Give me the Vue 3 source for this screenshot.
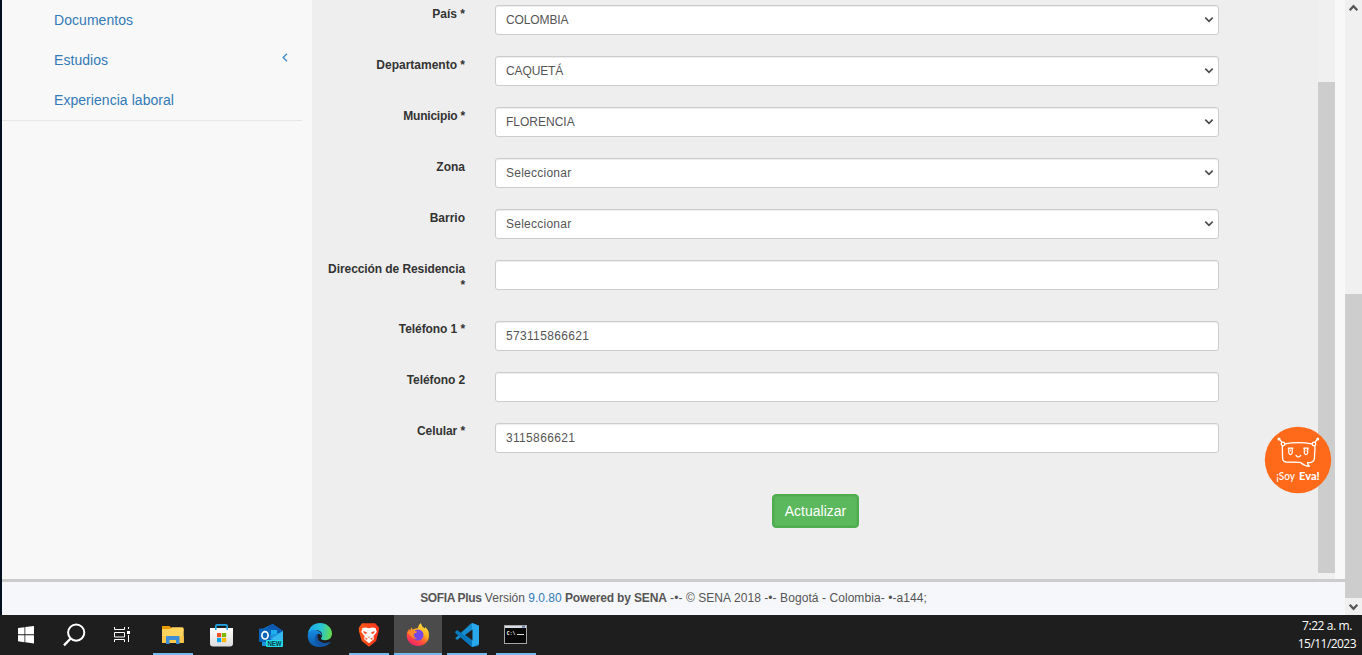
<script setup>
const fields = [
  { label: 'País *', value: 'COLOMBIA', select: true, kind: 'caps' },
  { label: 'Departamento *', value: 'CAQUETÁ', select: true, kind: 'caps' },
  { label: 'Municipio *', value: 'FLORENCIA', select: true, kind: 'plain', narrow: true },
  { label: 'Zona', value: 'Seleccionar', select: true, kind: 'wide' },
  { label: 'Barrio', value: 'Seleccionar', select: true, kind: 'wide' },
  { label: 'Dirección de Residencia *', value: '', tall: true },
  { label: 'Teléfono 1 *', value: '573115866621', kind: 'digits', low: true },
  { label: 'Teléfono 2', value: '', low: true },
  { label: 'Celular *', value: '3115866621', kind: 'digits', low: true }
]
</script>

<template>
  <div class="screen">
    <div class="browser">
      <div class="page">
        <div class="body">
          <nav class="sidebar">
            <a>Documentos</a>
            <a>Estudios
              <svg class="angle" width="6" height="9" viewBox="0 0 6 9"><path d="M5 .7 1.2 4.5 5 8.3" fill="none" stroke="#428bca" stroke-width="1.4" /></svg>
            </a>
            <a>Experiencia laboral</a>
          </nav>
          <main class="content">
            <div v-for="f in fields" :key="f.label" class="row" :class="{ tall: f.tall, low: f.low, narrow: f.narrow }">
              <label>{{ f.label }}</label>
              <div class="control">
                <span :class="f.kind">{{ f.value }}</span>
                <svg v-if="f.select" width="10" height="8" viewBox="0 0 10 8"><path d="M1.3 1.7 5 5.3 8.7 1.7" fill="none" stroke="#4c4c4c" stroke-width="1.7" /></svg>
              </div>
            </div>
            <div class="actions"><button>Actualizar</button></div>
          </main>
          <div class="inner-scroll"><i></i></div>
          <div class="gutter"></div>
        </div>
        <footer><p><b class="brand">SOFIA Plus</b> Versión <a>9.0.80</a> <b class="power">Powered by SENA</b> <span class="legal">-•- © SENA 2018 -•- Bogotá - Colombia- •-a144;</span></p></footer>
      </div>
      <div class="outer-scroll">
        <svg class="up" width="17" height="17" viewBox="0 0 17 17"><path d="M4.7 10.2 8.5 6.2 12.3 10.2" fill="none" stroke="#555" stroke-width="2.3" /></svg>
        <i></i>
        <svg class="down" width="17" height="17" viewBox="0 0 17 17"><path d="M4.7 6.8 8.5 10.8 12.3 6.8" fill="none" stroke="#555" stroke-width="2.3" /></svg>
      </div>
    </div>

    <div class="eva">
      <svg width="68" height="68" viewBox="0 0 68 68">
        <circle cx="34" cy="34" r="33.2" fill="#ff6a1a" />
        <g fill="none" stroke="#fff" stroke-width="1.3" stroke-linecap="round" stroke-linejoin="round">
          <path d="M21 17.8Q34 15.4 48 17.8Q51.3 18.4 51 22L50.4 32Q50.2 36 46.5 36.5L43.5 36.7Q43.7 38.7 45.5 40.2Q40.5 40 36.5 36.4L22 36Q18.8 35.8 18.6 32L18.3 22Q18.2 18.3 21 17.8Z" />
          <circle cx="19" cy="18" r="1.8" fill="#ff6a1a" /><circle cx="50" cy="18" r="1.8" fill="#ff6a1a" />
          <path d="M17.7 16 15.5 13.3M51.2 16 53.3 13.3" />
          <path d="M24.3 22.2H28.8M24.8 22.5V27Q26.5 30.3 28.2 27V22.5M39.8 22.2H44.3M40.3 22.5V27Q42 30.3 43.7 27V22.5M32 29.3Q34.3 32.7 36.7 29.3" stroke-width="1.2" />
          <path d="M26.5 24V25M42 24V25" stroke-width=".8" />
        </g>
        <circle cx="15" cy="13" r="1.5" fill="#fff" /><circle cx="53.7" cy="13" r="1.5" fill="#fff" />
        <text x="12.3" y="53.5" textLength="18.7" lengthAdjust="spacingAndGlyphs">¡Soy</text>
        <text x="35" y="53.5" class="strong" textLength="20.7" lengthAdjust="spacingAndGlyphs">Eva!</text>
      </svg>
    </div>

    <div class="taskbar">
      <span class="slot w52">
        <svg width="52" height="40" viewBox="0 0 52 40"><path d="M18 13.1 24.5 12.2V19.3H18ZM25.3 12.1 34 11V19.3H25.3ZM18 20.2H24.5V27.2L18 26.3ZM25.3 20.2H34V28.4L25.3 27.3Z" fill="#fff" /></svg>
      </span>
      <span class="slot w48">
        <svg width="48" height="40" viewBox="0 0 48 40"><circle cx="24.2" cy="17.6" r="8.1" fill="none" stroke="#fff" stroke-width="2" /><path d="M18.4 23.7 12 30.4" stroke="#fff" stroke-width="2.3" /></svg>
      </span>
      <span class="slot w48">
        <svg width="48" height="40" viewBox="0 0 48 40"><path d="M14.5 12V14.5H24.5V12M14.5 27V24.5H24.5V27M14.5 17.5H24.5V22H14.5ZM28.5 12V14M28.5 20V27" fill="none" stroke="#fff" stroke-width="1" /><path d="M27 16H30V19H27Z" fill="#fff" /></svg>
      </span>
      <span class="slot w49 open">
        <svg width="49" height="40" viewBox="0 0 49 40"><path d="M14 11H21.5L23.5 13H34Q35.5 13 35.5 14.5V16H14Z" fill="#e89a08" /><path d="M14 14H22L24 12.2H34.2Q35.7 12.2 35.7 13.7V27.8H14Z" fill="#ffd35d" /><path d="M14 21H35.7V28H14Z" fill="#fcc64a" /><path d="M18 29V22Q18 21 19 21H30.5Q31.5 21 31.5 22V29H28V25H21.5V29Z" fill="#3d8ed4" /></svg>
      </span>
      <span class="slot w49">
        <svg width="49" height="40" viewBox="0 0 49 40"><defs><linearGradient id="bag" x2="0" y2="1"><stop stop-color="#fff" /><stop offset="1" stop-color="#dcdcdc" /></linearGradient></defs><path d="M18.8 15V11.3Q18.8 9.8 20.3 9.8H28.7Q30.2 9.8 30.2 11.3V15" fill="none" stroke="#21a6e8" stroke-width="1.7" /><path d="M13 13H36V28.5Q36 31.5 33 31.5H16Q13 31.5 13 28.5Z" fill="url(#bag)" /><path d="M18.8 15V12.5M30.2 15V12.5" stroke="#21a6e8" stroke-width="1.5" /><path d="M20 18H24.2V22.2H20Z" fill="#f25022" /><path d="M25 18H29.2V22.2H25Z" fill="#7fba00" /><path d="M20 23H24.2V27.2H20Z" fill="#00a4ef" /><path d="M25 23H29.2V27.2H25Z" fill="#ffb900" /></svg>
      </span>
      <span class="slot w49">
        <svg width="49" height="40" viewBox="0 0 49 40"><path d="M16 14 26.5 9 37 16V31H16Z" fill="#1477c9" /><path d="M19 14 27 9 37 16 28 22Z" fill="#0d58b0" /><path d="M25 15H31V21L28 23 25 22Z" fill="#1db0ee" /><path d="M17 22 37 17V31H18Q16 31 16 29Z" fill="#1d94dc" /><path d="M37 16V29L25 24Z" fill="#35b9ef" /><path d="M13 14.5Q13 13.5 14 13.5H24.5V27H14Q13 27 13 26Z" fill="#0864b9" /><ellipse cx="19" cy="20.3" rx="3.1" ry="3.7" fill="none" stroke="#fff" stroke-width="1.7" /><rect x="20" y="25" width="17" height="7" rx="1" fill="#23dce5" /><text x="21.4" y="31" class="new" textLength="14.2" lengthAdjust="spacingAndGlyphs">NEW</text></svg>
      </span>
      <span class="slot w49">
        <svg width="49" height="40" viewBox="0 0 49 40"><defs><linearGradient id="ea" x1="0" y1=".3" x2="1" y2=".4"><stop stop-color="#1aa7ed" /><stop offset=".55" stop-color="#28c5d6" /><stop offset="1" stop-color="#64db4c" /></linearGradient><linearGradient id="eb" x2="0" y2="1"><stop stop-color="#168de4" /><stop offset="1" stop-color="#0c58a6" /></linearGradient></defs><path d="M12.8 18.6C14 12 19 8 25 8C32 8 37 13 37 18.5C37 22.8 34 25.2 30.2 25.2C27.8 25.2 25.7 24.4 26 23.2C27 21.8 27.3 20.9 27.1 19.2C26.6 14.7 18 12.6 12.8 18.6Z" fill="url(#ea)" /><path d="M12.8 19.5C14 14.4 20 13.4 24 16.3C25.8 17.6 26.9 18.7 26.8 21C24 17 20 20 20.2 24C20.8 28.6 25 32 29 31.2C19 34.5 12 28 12.8 19.5Z" fill="url(#eb)" /><path d="M23.3 18.2C19.5 20 18.7 25 21.5 28.4C25 33 32.3 32.5 36 26.5C32 29 23.8 28.3 22.8 23.2C22.4 21 22.5 20 23.3 18.2Z" fill="#1356a4" /></svg>
      </span>
      <span class="slot w50 open">
        <svg width="50" height="40" viewBox="-.5 0 50 40"><defs><linearGradient id="br"><stop stop-color="#ff5a19" /><stop offset="1" stop-color="#ff331b" /></linearGradient></defs><path d="M17.5 8.2H30.5L32.5 10.3 34.6 12.7 34.2 16 31.6 26 24.5 31.8 17.4 26 14.3 16 14.4 12.7Z" fill="url(#br)" /><path d="M18 13 21.3 12.4 24.3 13.3 27.6 12.4 31 13 32.3 17 29 21 29.3 24.3 24.5 28.3 19.7 24.3 20 21 16.8 17Z" fill="#fff" /><path d="M18.7 16 22.3 17.2 21.8 18.9 19.4 18.2ZM30.3 16 26.7 17.2 27.2 18.9 29.6 18.2ZM22.7 21.2 24.5 22 26.3 21.2 24.5 23ZM20.8 22.5 23.3 23.8 21.3 25ZM28.2 22.5 25.7 23.8 27.7 25Z" fill="#f4501f" /></svg>
      </span>
      <span class="slot w48 active">
        <svg width="48" height="40" viewBox="0 0 48 40"><defs><linearGradient id="fx" x1=".8" y1="0" x2=".25" y2="1"><stop stop-color="#ffe647" /><stop offset=".4" stop-color="#ffaf1e" /><stop offset=".68" stop-color="#ff5037" /><stop offset="1" stop-color="#eb1d74" /></linearGradient></defs><path d="M23.7 13.3Q24 9.8 27 8Q27.5 11.5 31 13.5L31 12Q35.3 15 35 21C34.8 27 30 31 24.2 31C17.8 31 12.7 26.2 12.7 20.5Q12.7 16.5 15.2 13.7L16 16 17.5 12.2 18.7 14.8Q21 13 23.7 13.3Z" fill="url(#fx)" /><circle cx="24" cy="20" r="5.5" fill="#7647e5" /><path d="M13.3 17.4Q17.7 14.5 23.5 16.7Q22.3 18.3 19.7 18.7Q19.7 22.7 23 23.4Q20 25 16 20Z" fill="#ff8a2b" /></svg>
      </span>
      <span class="slot w49 open">
        <svg width="50" height="40" viewBox="0 0 50 40"><path d="M30 8 37 10.7V29.3L30 32 19 21.8 15.8 24.5Q15.2 25 14.6 24.5L13.2 23.2 28.4 9Z" fill="#168dce" /><path d="M13.2 16.8 14.6 15.5Q15.2 15 15.8 15.5L37 31Q36 31 30 32L13.2 18Z" fill="#0878bd" /><path d="M30 8 37 10.7V29.3L30 32Z" fill="#29a8ec" /><path d="M30.5 14.5V25.5L23 20Z" fill="#1e1e1e" /></svg>
      </span>
      <span class="slot w48 open">
        <svg width="48" height="40" viewBox="0 0 48 40"><rect x="13.5" y="10.5" width="22" height="18" fill="#080808" stroke="#a5a5a5" /><path d="M14 11H35V13H14Z" fill="#d8dee5" /><path d="M31 11H34V12.6H31Z" fill="#597da5" /><text x="15.8" y="19.5" class="cmd" textLength="8.6" lengthAdjust="spacingAndGlyphs">C:\</text><path d="M26 19.5H33" stroke="#ddd" /></svg>
      </span>
      <div class="clock"><span>7:22 a. m.</span><span class="date">15/11/2023</span></div>
    </div>
  </div>
</template>

<style>
html, body { margin: 0; overflow: hidden; }
</style>

<style scoped>
* { box-sizing: border-box; }
.screen { width: 1362px; height: 655px; position: relative; background: #02101f; font-family: "Liberation Sans", Arial, sans-serif; overflow: hidden; }
.browser { height: 615px; margin-left: 2px; display: flex; }
.page { width: 1343px; display: flex; flex-direction: column; }
.body { height: 579px; display: flex; overflow: hidden; background: #f8f8f8; }
.sidebar { width: 300px; height: 121px; margin-right: 10px; border-bottom: 1px solid #e7e7e7; flex: none; }
.sidebar a { display: flex; justify-content: space-between; align-items: center; height: 40px; padding: 0 14px 0 52px; color: #337ab7; font-size: 14px; letter-spacing: .05px; }
.angle { margin-top: -5px; }
.content { width: 1006px; padding-top: 5px; background: #eee; flex: none; }
.row { display: flex; height: 51px; }
.row.tall { height: 61px; }
label { width: 153px; margin-right: 30px; padding: 1px 0 0 10px; text-align: right; font-size: 12px; line-height: 17px; font-weight: 700; color: #333; }
.low label { padding-top: 0; letter-spacing: -.08px; }
.tall label { line-height: 16px; padding-top: 1px; letter-spacing: -.08px; }
.narrow label { letter-spacing: -.2px; }
.control { width: 724px; height: 30px; padding: 0 4px 1px 10px; display: flex; align-items: center; justify-content: space-between; background: #fff; border: 1px solid #ccc; border-radius: 3px; box-shadow: inset 0 1px 1px rgba(0,0,0,.075); color: #555; font-size: 12px; }
.control svg { margin-top: 1px; }
.caps { letter-spacing: -.12px; }
.wide { letter-spacing: .25px; }
.digits { letter-spacing: .33px; }
.actions { padding: 20px 0 0 460px; }
button { width: 87px; height: 34px; padding: 0; border: 1px solid #4cae4c; border-radius: 4px; background: #5cb85c; color: #fff; font: 14px "Liberation Sans", sans-serif; box-shadow: inset 0 0 2px 1px #4ca64c; }
.inner-scroll { width: 17px; padding-top: 82px; background: #f0f0f0; flex: none; }
.inner-scroll i { display: block; height: 491px; background: #cdcdcd; }
.gutter { width: 10px; background: #f8f8f8; }
footer { height: 36px; border-top: 3px solid #ccc; background: #f5f7fa; color: #555; text-align: center; font-size: 12px; line-height: 32px; white-space: nowrap; }
footer p { margin: 0; }
footer a { color: #337ab7; }
.brand { letter-spacing: -.35px; }
.power { letter-spacing: -.15px; }
.legal { letter-spacing: .07px; }
.outer-scroll { width: 17px; background: #f0f0f0; display: flex; flex-direction: column; }
.outer-scroll i { display: block; height: 304px; margin-top: 277px; background: #cdcdcd; }
.outer-scroll svg { display: block; flex: none; }
.eva { position: absolute; left: 1264px; top: 426px; width: 68px; height: 68px; }
.eva text { fill: #fff; font: 500 10.5px Lato, sans-serif; }
.eva .strong { font-weight: 900; }
.taskbar { height: 40px; display: flex; background: #1e1e1e; }
.slot { height: 40px; position: relative; display: block; flex: none; }
.slot svg { display: block; }
.w48 { width: 48px; }
.w49 { width: 49px; }
.w50 { width: 50px; }
.w52 { width: 52px; }
.open::after, .active::after { content: ""; position: absolute; left: 5px; bottom: 0; width: 40px; height: 2px; background: #76b9ed; }
.active { background: #4b4b4b; }
.active::after { left: 0; width: 48px; }
.new { font: 900 6.5px "Liberation Sans", sans-serif; fill: #083a4e; }
.cmd { font: 700 6px "Liberation Mono", monospace; fill: #fff; }
.clock { margin-left: auto; padding: 2px 6px 0 0; font: 12px/18px "Open Sans", sans-serif; letter-spacing: -.4px; color: #fff; display: flex; flex-direction: column; align-items: flex-end; white-space: nowrap; }
.clock span:first-child { margin-right: 4px; }
.clock .date { letter-spacing: -.55px; }
</style>
